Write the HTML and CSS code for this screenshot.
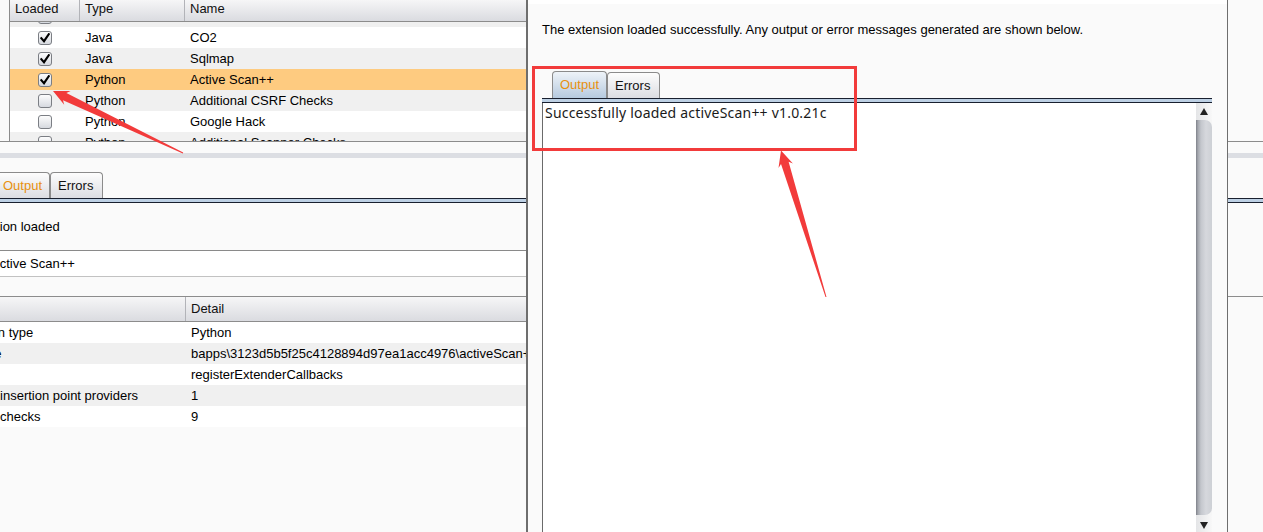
FILE: index.html
```html
<!DOCTYPE html>
<html>
<head>
<meta charset="utf-8">
<title>Extender</title>
<link rel="stylesheet" href="styles.css">
</head>
<body>
<div class="app">
  <section class="ext-pane">
    <div class="ext-table">
      <div class="thead grid3">
        <div class="th">Loaded</div>
        <div class="th">Type</div>
        <div class="th">Name</div>
      </div>
      <div class="tbody">
        <div class="tbody-inner">
          <div class="tr grid3 alt">
            <div class="td c"><span class="cb"><svg class="tick" viewBox="0 0 10 10"><path d="M1.3 5.2 L4 8.2 L8.8 1.2"/></svg></span></div>
            <div class="td">Java</div><div class="td">CSRF Scanner</div>
          </div>
          <div class="tr grid3">
            <div class="td c"><span class="cb"><svg class="tick" viewBox="0 0 10 10"><path d="M1.3 5.2 L4 8.2 L8.8 1.2"/></svg></span></div>
            <div class="td">Java</div><div class="td">CO2</div>
          </div>
          <div class="tr grid3 alt">
            <div class="td c"><span class="cb"><svg class="tick" viewBox="0 0 10 10"><path d="M1.3 5.2 L4 8.2 L8.8 1.2"/></svg></span></div>
            <div class="td">Java</div><div class="td">Sqlmap</div>
          </div>
          <div class="tr grid3 sel">
            <div class="td c"><span class="cb"><svg class="tick" viewBox="0 0 10 10"><path d="M1.3 5.2 L4 8.2 L8.8 1.2"/></svg></span></div>
            <div class="td">Python</div><div class="td">Active Scan++</div>
          </div>
          <div class="tr grid3 alt">
            <div class="td c"><span class="cb"></span></div>
            <div class="td">Python</div><div class="td">Additional CSRF Checks</div>
          </div>
          <div class="tr grid3">
            <div class="td c"><span class="cb"></span></div>
            <div class="td">Python</div><div class="td">Google Hack</div>
          </div>
          <div class="tr grid3 alt">
            <div class="td c"><span class="cb"></span></div>
            <div class="td">Python</div><div class="td">Additional Scanner Checks</div>
          </div>
        </div>
      </div>
    </div>
  </section>
  <div class="split-gap"></div>
  <div class="divider"></div>

  <section class="detail-pane">
    <div class="tabs tabs-left">
      <div class="tab w-out"><span class="orange">Output</span></div>
      <div class="tab w-err">Errors</div>
    </div>
    <div class="tabband"></div>
    <div class="loaded-row"><span class="loaded-text">Extension loaded</span></div>
    <div class="name-field">Active Scan++</div>
    <div class="item-wrap">
      <div class="item-table">
        <div class="ihead grid2">
          <div class="th ic1">Item</div>
          <div class="th ic2">Detail</div>
        </div>
        <div class="itr grid2"><div class="itd ic1">Extension type</div><div class="itd ic2">Python</div></div>
        <div class="itr grid2 alt"><div class="itd ic1">Filename</div><div class="itd ic2">bapps\3123d5b5f25c4128894d97ea1acc4976\activeScan++.py</div></div>
        <div class="itr grid2"><div class="itd ic1">Method</div><div class="itd ic2">registerExtenderCallbacks</div></div>
        <div class="itr grid2 alt"><div class="itd ic1">Scanner insertion point providers</div><div class="itd ic2">1</div></div>
        <div class="itr grid2"><div class="itd ic1">Scanner checks</div><div class="itd ic2">9</div></div>
      </div>
    </div>
  </section>

  <div class="dialog">
    <div class="dlg-top"></div>
    <div class="dlg-msg">The extension loaded successfully. Any output or error messages generated are shown below.</div>
    <div class="dlg-out">
      <div class="tabs dlg-tabs">
        <div class="tab sel w-out"><span class="orange">Output</span></div>
        <div class="tab w-err">Errors</div>
      </div>
      <div class="tabband"></div>
      <div class="textarea">
        <div class="text">Successfully loaded activeScan++ v1.0.21c</div>
        <div class="scrollbar">
          <div class="sb-btn"><span class="tri-up"></span></div>
          <div class="sb-thumb"></div>
          <div class="sb-btn"><span class="tri-down"></span></div>
        </div>
      </div>
    </div>
  </div>

  <svg class="annot" width="1263" height="532" viewBox="0 0 1263 532">
    <rect x="533.5" y="67.5" width="322" height="82" fill="none" stroke="#f23b3b" stroke-width="3"/>
    <polygon fill="#f23b3b" points="53,91 70.6,91.1 66.4,93 183.2,152.5 182.8,153.5 63,100.2 64.2,104.7"/>
    <polygon fill="#f23b3b" points="781,150.5 792.9,163.6 788.6,161.7 826.5,296.9 825.5,297.1 781,164.1 778.5,168"/>
  </svg>
</div>
</body>
</html>
```

FILE: styles.css
```css
* { box-sizing: border-box; }
html, body { margin: 0; padding: 0; }
body {
  width: 1263px;
  height: 532px;
  overflow: hidden;
  background: #fafafa;
  font-family: "Liberation Sans", Arial, sans-serif;
  font-size: 13px;
  color: #000;
}
.app { position: relative; width: 1263px; height: 532px; overflow: hidden; }

/* top extensions table */
.ext-pane { height: 142px; border-bottom: 1px solid #8c8c8c; }
.ext-table {
  margin-left: 9px;
  width: 1190px;
  height: 141px;
  border-left: 1px solid #8c8c8c;
  background: #fff;
  overflow: hidden;
}
.grid3 { display: grid; grid-template-columns: 70px 105px 1fr; }
.thead {
  height: 22px;
  border-bottom: 1px solid #8c8c8c;
  background: linear-gradient(#f6f6f7, #dadbe0);
}
.th {
  height: 21px;
  padding-left: 5px;
  line-height: 18px;
  border-right: 1px solid #b2b3b8;
  white-space: nowrap;
  overflow: hidden;
  color: #111;
}
.tbody { height: 119px; overflow: hidden; }
.tbody-inner { margin-top: -16px; }
.tr { height: 21px; background: #fff; }
.tr.alt { background: #f0f0f0; }
.tr.sel { background: #fecb80; }
.td { padding-left: 5px; line-height: 21px; white-space: nowrap; overflow: hidden; }
.td.c { display: flex; align-items: center; justify-content: center; padding: 0; }
.cb {
  width: 14px;
  height: 14px;
  border: 1px solid #7b7e84;
  border-radius: 3px;
  background: linear-gradient(#fdfdfd, #d6d9df);
  display: flex;
  align-items: center;
  justify-content: center;
}
.tick { width: 10px; height: 10px; }
.tick path { fill: none; stroke: #000; stroke-width: 2.1; stroke-linecap: square; }

.split-gap { height: 11px; }
.divider { height: 5px; background: #dcdee3; }

/* lower pane */
.detail-pane { padding-top: 14px; }
.tabs { display: flex; align-items: flex-end; height: 26px; }
.tabs-left { margin-left: -5px; }
.tab {
  height: 26px;
  padding-left: 7px;
  border: 1px solid #8b8b8b;
  border-bottom: none;
  border-radius: 4px 4px 0 0;
  background: linear-gradient(#fdfdfd, #dcdde2);
  line-height: 25px;
  white-space: nowrap;
  color: #111;
}
.w-out { width: 55px; }
.w-err { width: 53px; }
.orange { color: #e8900f; }
.tabband {
  height: 5px;
  border-top: 1px solid #19202f;
  border-bottom: 1px solid #19202f;
  background: #bdd0e4;
}
.loaded-row { height: 47px; display: flex; align-items: center; white-space: nowrap; }
.loaded-text { margin-left: -40px; }
.name-field {
  width: 1190px;
  height: 27px;
  border-top: 1px solid #8a8a8a;
  border-bottom: 1px solid #c2c2c2;
  background: #fff;
  line-height: 25px;
  text-indent: -9px;
  white-space: nowrap;
}
.item-wrap { margin-top: 19px; border-top: 1px solid #8c8c8c; }
.item-table { margin-left: -58px; width: 1248px; }
.grid2 { display: grid; grid-template-columns: 244px 1fr; }
.ihead {
  height: 25px;
  border-bottom: 1px solid #8c8c8c;
  background: linear-gradient(#f6f6f7, #dadbe0);
}
.ihead .th { height: 24px; line-height: 23px; }
.ihead .ic2 { border-right: none; }
.ic1 { padding-left: 6px; }
.ic2 { padding-left: 5px; }
.itr { height: 21px; background: #fff; }
.itr.alt { background: #f0f0f0; }
.itd { line-height: 21px; white-space: nowrap; overflow: hidden; }

/* dialog window */
.dialog {
  position: absolute;
  left: 526px;
  top: 0;
  width: 702px;
  height: 532px;
  background: #fafafa;
  border-left: 2px solid #6e6e6e;
  border-right: 1px solid #6e6e6e;
  overflow: hidden;
}
.dlg-top { height: 4px; background: #fff; }
.dlg-msg { margin-top: 18px; padding-left: 14px; line-height: 16px; white-space: nowrap; }
.dlg-out { margin-top: 33px; margin-left: 14px; width: 670px; }
.dlg-tabs { padding-left: 10px; height: 27px; }
.tab.sel { height: 27px; line-height: 26px; background: linear-gradient(#eef3f8, #b6cadf); }
.textarea { display: flex; height: 432px; border-left: 1px solid #6a6a6a; background: #fff; }
.text {
  flex: 1;
  padding: 1px 0 0 2px;
  font-family: "Noto Sans", "Liberation Sans", sans-serif;
  font-size: 14px;
  letter-spacing: 0.2px;
  line-height: 18px;
  color: #1a1a1a;
  white-space: nowrap;
}
.scrollbar { width: 16px; display: flex; flex-direction: column; background: #f6f6f6; }
.sb-btn {
  height: 17px;
  display: flex;
  align-items: center;
  justify-content: center;
  background: linear-gradient(90deg, #e4e5e7, #f8f8f8);
}
.sb-btn:last-child { height: 20px; }
.sb-thumb {
  flex: 1;
  border-radius: 0 7px 7px 0;
  background: linear-gradient(90deg, #7f828a 0, #a4a7ae 2px, #c4c7cd 5px, #d6d8dd 10px, #cdd0d5 16px);
}
.tri-up { width: 0; height: 0; border-left: 4px solid transparent; border-right: 4px solid transparent; border-bottom: 7px solid #222; }
.tri-down { width: 0; height: 0; border-left: 4px solid transparent; border-right: 4px solid transparent; border-top: 7px solid #222; }

.annot { position: absolute; left: 0; top: 0; pointer-events: none; }
```
